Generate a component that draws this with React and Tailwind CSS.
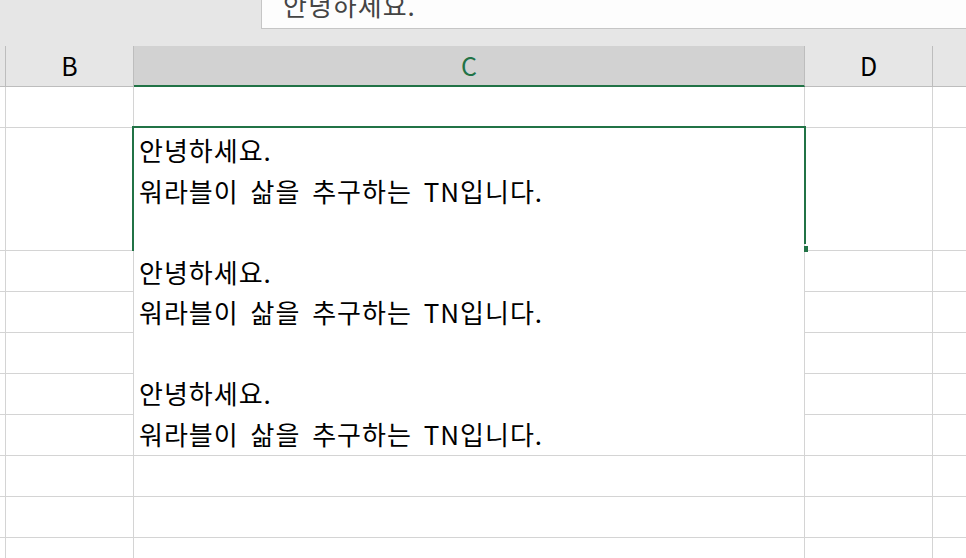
import React from "react";

const FONT = "font-['Noto_Sans_CJK_KR','Noto_Sans',sans-serif]";

function Cell({ kind }) {
  if (kind === "e") return <div className="border-b border-[#d4d4d4] bg-white" />;
  return <div className="border-r border-b border-[#d4d4d4] bg-white" />;
}

function Row({ skipC }) {
  return (
    <>
      <Cell kind="a" />
      <Cell kind="n" />
      {!skipC && <Cell kind="n" />}
      <Cell kind="n" />
      <Cell kind="e" />
    </>
  );
}

export default function App() {
  const lines = [
    "안녕하세요.",
    "워라블이 삶을 추구하는 TN입니다.",
    "",
    "안녕하세요.",
    "워라블이 삶을 추구하는 TN입니다.",
    "",
    "안녕하세요.",
    "워라블이 삶을 추구하는 TN입니다.",
  ];
  return (
    <div className={`w-[966px] h-[558px] overflow-hidden bg-[#e6e6e6] ${FONT}`}>
      {/* formula bar */}
      <div className="flex h-[29px]">
        <div className="w-[261px] shrink-0 bg-[#e6e6e6]" />
        <div className="flex-1 bg-[#fdfdfd] border-l border-b border-[#c6c6c6] overflow-hidden pl-[21px]">
          <div className="text-[26px] leading-[26px] tracking-[1px] text-[#444] mt-[-8px] whitespace-nowrap">
            안녕하세요.
          </div>
        </div>
      </div>
      <div className="h-[17px] bg-[#e6e6e6]" />
      {/* grid */}
      <div className="grid grid-cols-[6px_128px_671px_128px_1fr] grid-rows-[41px_41px_123px_41px_41px_41px_41px_41px_41px_41px_41px]">
        {/* header */}
        <div className="bg-[#e6e6e6] border-r border-b border-[#bdbdbd]" />
        <div className="bg-[#e6e6e6] border-r border-b border-[#bdbdbd] flex items-center justify-center text-[25px] text-black">
          B
        </div>
        <div className="bg-[#d2d2d2] border-r border-r-[#bdbdbd] border-b-2 border-b-[#217346] flex items-center justify-center text-[25px] text-[#217346]">
          C
        </div>
        <div className="bg-[#e6e6e6] border-r border-b border-[#bdbdbd] flex items-center justify-center text-[25px] text-black">
          D
        </div>
        <div className="bg-[#e6e6e6] border-b border-[#bdbdbd]" />

        {/* row 1 */}
        <Row />

        {/* merged C cell with text */}
        <div className="col-start-3 row-start-3 row-span-6 relative bg-white border-r border-b border-[#d4d4d4] pl-[5px] pt-[2px]">
          <div className="text-[26px] leading-[40.5px] tracking-[1px] [word-spacing:5px] text-black whitespace-nowrap">
            {lines.map((l, i) => (
              <div key={i} className="h-[40.5px]">{l}</div>
            ))}
          </div>
          {/* selection */}
          <div className="absolute top-[-2px] left-[-2px] w-[672px] h-[125px] border-t-2 border-l-2 border-[#217346] pointer-events-none" />
          <div className="absolute top-[-2px] left-[670px] w-[2px] h-[118px] bg-[#217346]" />
          <div className="absolute top-[118px] left-[670px] w-[4px] h-[6px] bg-[#217346]" />
        </div>

        {/* row 2 */}
        <Row skipC />
        {/* rows 3-7 */}
        <Row skipC />
        <Row skipC />
        <Row skipC />
        <Row skipC />
        <Row skipC />
        {/* rows 8-10 */}
        <Row />
        <Row />
        <Row />
      </div>
    </div>
  );
}
